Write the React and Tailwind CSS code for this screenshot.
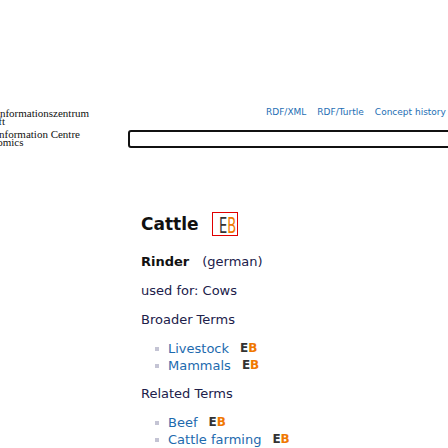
import React from "react";

const sans = { fontFamily: '"DejaVu Sans", Verdana, sans-serif' };

function EBSmall() {
  return (
    <span className="ml-[11px] text-[12px] font-bold leading-[17px]">
      <span className="text-[#333333]">E</span>
      <span className="text-[#f07800]">B</span>
    </span>
  );
}

function Item({ label }) {
  return (
    <li className="flex items-center leading-[17px]">
      <span className="ml-[14px] mr-[9px] inline-block h-[4px] w-[4px] bg-[#c4c4d4]" />
      <a className="text-[#1d6aae]">{label}</a>
      <EBSmall />
    </li>
  );
}

export default function App() {
  return (
    <div className="relative h-[448px] w-[448px] overflow-hidden bg-white" style={sans}>
      <div className="flex pt-[106px]">
        <div className="w-[128px] shrink-0">
          <div className="mt-[2.5px] ml-[-41px] whitespace-nowrap font-['Liberation_Serif','Times_New_Roman',serif] text-[11px] leading-[8.5px] text-[#111111]">
            <div>Leibniz-Informationszentrum</div>
            <div>Wirtschaft</div>
            <div className="mt-[4px]">Leibniz Information Centre</div>
            <div>for Economics</div>
          </div>
        </div>
        <div className="flex-1">
          <div className="ml-[138px] flex gap-[11px] whitespace-nowrap text-[9px] leading-[12px] text-[#1e6eb4]">
            <a>RDF/XML</a>
            <a>RDF/Turtle</a>
            <a>Concept history (</a>
          </div>
          <div className="mt-[12px] h-[18px] w-[340px] rounded-[3px] border-2 border-[#111111]" />
        </div>
      </div>

      <div className="ml-[141px] mt-[64px] text-[13px] text-[#20204a]">
        <div className="flex h-[24px] items-center">
          <h1 className="text-[17px] font-bold leading-[24px] text-[#111111]">Cattle</h1>
          <div className="ml-[13px] flex h-[24px] w-[26px] items-center overflow-hidden border border-[#e00000] pl-[6px]">
            <span className="inline-block origin-left whitespace-nowrap text-[21px] leading-[22px] [transform:translateY(2px)_scaleX(0.62)]">
              <span className="text-[#333333]">E</span>
              <span className="text-[#f07800]">B</span>
            </span>
          </div>
        </div>

        <div className="mt-[17px] leading-[17px]">
          <span className="font-bold text-[#111111]">Rinder</span>
          <span className="ml-[13px]">(german)</span>
        </div>

        <div className="mt-[12px] leading-[17px]">used for: Cows</div>

        <div className="mt-[12px] leading-[17px]">Broader Terms</div>
        <ul className="mt-[12px]">
          <Item label="Livestock" />
          <Item label="Mammals" />
        </ul>

        <div className="mt-[11px] leading-[17px]">Related Terms</div>
        <ul className="mt-[12px]">
          <Item label="Beef" />
          <Item label="Cattle farming" />
        </ul>
      </div>
    </div>
  );
}
